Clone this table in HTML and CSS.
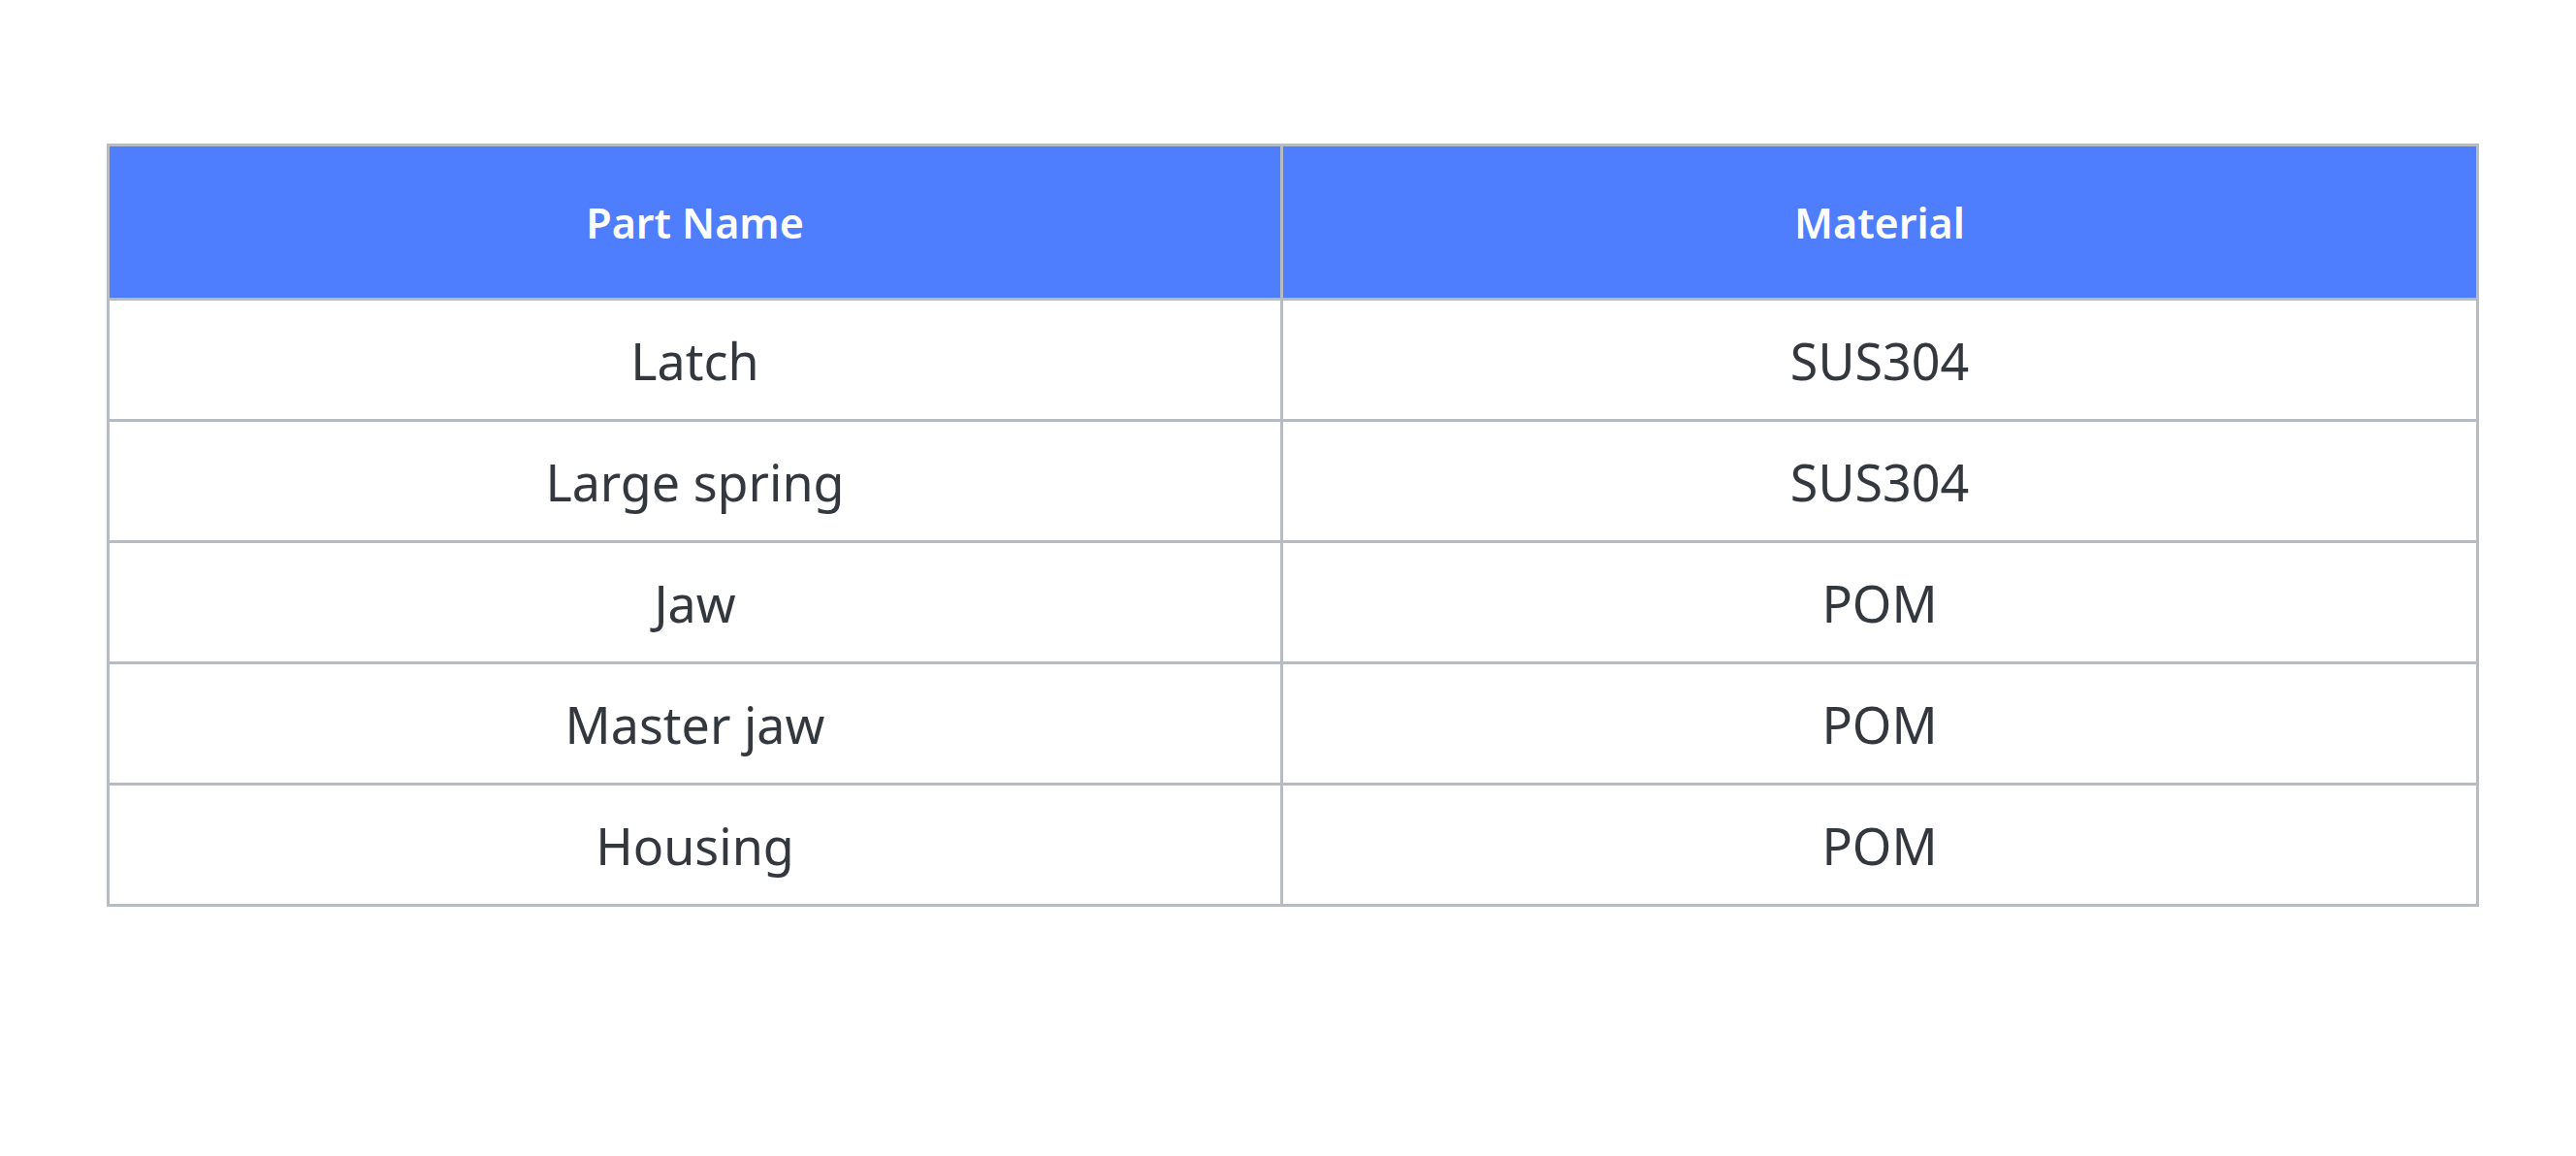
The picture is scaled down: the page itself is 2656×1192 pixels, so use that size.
FILE: index.html
```html
<!DOCTYPE html>
<html lang="en">
<head>
<meta charset="utf-8">
<title>Parts and materials</title>
<link rel="stylesheet" href="styles.css">
</head>
<body>
<main class="page">
  <table class="parts">
    <thead>
      <tr>
        <th class="col-name">Part Name</th>
        <th class="col-mat">Material</th>
      </tr>
    </thead>
    <tbody>
      <tr><td>Latch</td><td>SUS304</td></tr>
      <tr><td>Large spring</td><td>SUS304</td></tr>
      <tr><td>Jaw</td><td>POM</td></tr>
      <tr><td>Master jaw</td><td>POM</td></tr>
      <tr><td>Housing</td><td>POM</td></tr>
    </tbody>
  </table>
</main>
</body>
</html>
```

FILE: styles.css
```css
html, body {
  margin: 0;
  padding: 0;
  background: #ffffff;
}

.page {
  padding: 148px 0 0 110px;
  font-family: "Noto Sans", "Open Sans", sans-serif;
}

.parts {
  border-collapse: separate;
  border-spacing: 0;
  border-left: 3px solid #b7bbc2;
  border-top: 3px solid #b7bbc2;
  width: 2446px;
  table-layout: fixed;
}

.parts th,
.parts td {
  border-right: 3px solid #b7bbc2;
  border-bottom: 3px solid #b7bbc2;
  text-align: center;
  vertical-align: middle;
  padding: 0;
}

.col-name {
  width: 1207px;
}

.parts th {
  height: 156px;
  background: #4e7dfe;
  color: #ffffff;
  font-weight: 600;
  font-size: 43px;
}

.parts td {
  height: 122px;
  color: #33373e;
  font-weight: 400;
  font-size: 52px;
}
```
